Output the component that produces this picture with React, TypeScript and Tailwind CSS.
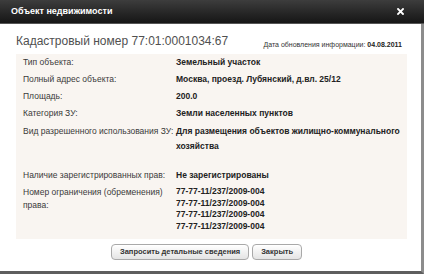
// Карточка объекта недвижимости: модальное окно с данными из кадастра

const MAIN_ROWS: { label: string; value: string }[] = [
  { label: 'Тип объекта:', value: 'Земельный участок' },
  { label: 'Полный адрес объекта:', value: 'Москва, проезд. Лубянский, д.вл. 25/12' },
  { label: 'Площадь:', value: '200.0' },
  { label: 'Категория ЗУ:', value: 'Земли населенных пунктов' },
]

const RESTRICTIONS = [
  '77-77-11/237/2009-004',
  '77-77-11/237/2009-004',
  '77-77-11/237/2009-004',
  '77-77-11/237/2009-004',
]

function CloseIcon() {
  return (
    <svg width="7" height="7" viewBox="0 0 7 7" className="block">
      <path d="M1 1 L6 6 M6 1 L1 6" stroke="#fff" strokeWidth="1.8" strokeLinecap="square" />
    </svg>
  )
}

function DialogButton({ children }: { children: string }) {
  return (
    <button className="h-[16px] rounded-[4px] border border-[#a9a9a9] bg-gradient-to-b from-white to-[#e4e4e4] px-[8px] text-[7.5px] font-bold leading-none whitespace-nowrap text-[#333] shadow-[inset_0_1px_0_#fff]">
      {children}
    </button>
  )
}

export default function App() {
  return (
    <div className="flex h-[274px] w-[424px] flex-col bg-white font-['Liberation_Sans',Arial,sans-serif]">
      {/* TITLE BAR */}
      <div className="flex h-[24px] shrink-0 items-center justify-between border-b border-[#555] bg-gradient-to-b from-[#3d3d3d] to-[#161616] pl-[11px] pr-[20px]">
        <span className="text-[9px] font-bold text-white">Объект недвижимости</span>
        <CloseIcon />
      </div>

      {/* BODY */}
      <div className="flex flex-1 flex-col border-b-[3px] border-r-[3px] border-b-[#5e5e5e] border-r-[#8c8c8c] pl-[16px] pr-[14px]">
        <div className="flex h-[30px] items-end justify-between pb-[5px]">
          <h1 className="whitespace-nowrap text-[12px] leading-[15px] text-[#505050]">Кадастровый номер 77:01:0001034:67</h1>
          <p className="whitespace-nowrap pb-[1px] pr-[5px] text-[7px] leading-none text-[#333]">
            Дата обновления информации: <b className="text-[#222]">04.08.2011</b>
          </p>
        </div>

        {/* DATA PANEL */}
        <div className="grid grid-cols-[153px_1fr] bg-[#f9f5f1] pb-[7px] pl-[7px] text-[8.5px] text-[#3a3a3a]">
          {MAIN_ROWS.map((row) => (
            <div key={row.label} className="contents">
              <div className="leading-[17px]">{row.label}</div>
              <div className="font-bold leading-[17px] text-[#222]">{row.value}</div>
            </div>
          ))}

          <div className="pt-[2px] leading-[15px]">Вид разрешенного использования ЗУ:</div>
          <div className="pt-[2px] font-bold leading-[15px] text-[#222]">
            Для размещения объектов жилищно-коммунального
            <br />
            хозяйства
          </div>

          <div className="col-span-2 h-[13px]" />

          <div className="leading-[17px]">Наличие зарегистрированных прав:</div>
          <div className="font-bold leading-[17px] text-[#222]">Не зарегистрированы</div>

          <div className="pt-[2px] leading-[13px]">
            Номер ограничения (обременения)
            <br />
            права:
          </div>
          <div className="pt-[2px] font-bold leading-[11.5px] text-[#222]">
            {RESTRICTIONS.map((num, i) => (
              <div key={i}>{num}</div>
            ))}
          </div>
        </div>

        {/* ACTIONS */}
        <div className="flex gap-[3px] pl-[95px] pt-[5px]">
          <DialogButton>Запросить детальные сведения</DialogButton>
          <DialogButton>Закрыть</DialogButton>
        </div>
      </div>
    </div>
  )
}
